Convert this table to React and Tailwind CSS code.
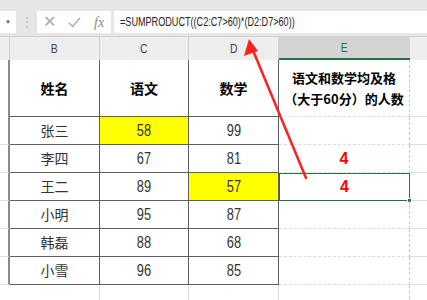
import React from 'react';

const cjk = { fontFamily: '"Noto Sans CJK SC", "Liberation Sans", sans-serif' };
const num = { fontFamily: '"Liberation Sans", sans-serif' };

const rows = [
  { name: '张三', chinese: 58, math: 99, yc: true },
  { name: '李四', chinese: 67, math: 81, result: '4' },
  { name: '王二', chinese: 89, math: 57, yd: true, result: '4', selected: true },
  { name: '小明', chinese: 95, math: 87 },
  { name: '韩磊', chinese: 88, math: 68 },
  { name: '小雪', chinese: 96, math: 85 },
];

const dark = 'border-[#5f5f5f]';

function FormulaBar() {
  return (
    <div className="h-[37px] bg-[#e6e6e6] flex items-start pt-[11px] border-b border-[#d0d0d0]">
      <div className="w-[16px] h-[22px] bg-white flex items-center justify-center text-[6px] text-[#555]">▼</div>
      <div className="w-[21px] h-[22px] flex items-center justify-center text-[12px] text-[#b5b5b5] leading-none">⋮</div>
      <div className="w-[74px] h-[22px] bg-white flex items-center text-[#a8a8a8]">
        <span className="ml-[6px] text-[16px] leading-none" style={{ fontFamily: '"Liberation Sans", sans-serif' }}>✕</span>
        <svg className="ml-[12px]" width="13" height="11" viewBox="0 0 13 11">
          <path d="M1 6 L4.5 9.5 L12 1" fill="none" stroke="#a8a8a8" strokeWidth="1.3" />
        </svg>
        <span className="ml-[13px] italic text-[14px] text-[#8a8a8a]" style={{ fontFamily: '"Liberation Serif", serif' }}>fx</span>
      </div>
      <div
        className="ml-[3px] flex-1 h-[22px] bg-white flex items-center pl-[6px] text-[13px] text-[#222] overflow-hidden"
        style={{ fontFamily: '"Liberation Sans", sans-serif' }}
      >
        <span className="inline-block whitespace-nowrap origin-left scale-x-[0.7]">=SUMPRODUCT((C2:C7&gt;60)*(D2:D7&gt;60))</span>
      </div>
    </div>
  );
}

function ColumnHeaders() {
  const base = 'h-[23px] flex items-center justify-center text-[13px] text-[#444] border-r border-[#cfcfcf]';
  return (
    <div className="flex bg-[#eeeeee]" style={{ fontFamily: '"Liberation Sans", sans-serif' }}>
      <div className={`${base} w-[10px]`}></div>
      <div className={`${base} w-[90px]`}><span className="inline-block scale-x-[0.8]">B</span></div>
      <div className={`${base} w-[89px]`}><span className="inline-block scale-x-[0.8]">C</span></div>
      <div className={`${base} w-[90px]`}><span className="inline-block scale-x-[0.8]">D</span></div>
      <div className="w-[131px] h-[23px] flex items-center justify-center text-[13px] text-[#217346] bg-[#d4d4d4] border-b-2 border-[#217346]"><span className="inline-block scale-x-[0.8]">E</span></div>
      <div className="flex-1 h-[23px]"></div>
    </div>
  );
}

export default function App() {
  return (
    <div className="relative w-[427px] h-[300px] bg-white overflow-hidden">
      <FormulaBar />
      <ColumnHeaders />

      {/* data header row */}
      <div className="flex h-[57px]">
        <div className="w-[10px] border-r-2 border-[#8a8a8a]"></div>
        <div className={`w-[90px] border-r ${dark} border-b flex items-center justify-center text-[14px] font-bold text-black`} style={cjk}>姓名</div>
        <div className={`w-[89px] border-r ${dark} border-b flex items-center justify-center text-[14px] font-bold text-black`} style={cjk}>语文</div>
        <div className={`w-[90px] border-r ${dark} border-b flex items-center justify-center text-[14px] font-bold text-black`} style={cjk}>数学</div>
        <div className="w-[131px] border-b border-[#dcdcdc] border-r border-r-[#c8c8c8] border-dashed flex flex-col items-center justify-center text-[13px] font-bold text-black leading-[21px]" style={cjk}>
          <span>语文和数学均及格</span>
          <span>（大于60分）的人数</span>
        </div>
        <div className="flex-1 border-b border-[#dcdcdc]"></div>
      </div>

      {rows.map((r, i) => (
        <div key={i} className="flex h-[28px]">
          <div className="w-[10px] border-r-2 border-[#8a8a8a] border-b border-b-[#e0e0e0]"></div>
          <div className={`w-[90px] border-r border-b ${dark} flex items-center justify-center text-[14px] text-[#333]`} style={cjk}>{r.name}</div>
          <div className={`w-[89px] border-r border-b ${dark} flex items-center justify-center text-[16px] text-[#333] ${r.yc ? 'bg-[#ffff00]' : ''}`} style={num}>
            <span className="inline-block scale-x-[0.8]">{r.chinese}</span>
          </div>
          <div className={`w-[90px] border-r border-b ${dark} flex items-center justify-center text-[16px] text-[#333] ${r.yd ? 'bg-[#ffff00]' : ''}`} style={num}>
            <span className="inline-block scale-x-[0.8]">{r.math}</span>
          </div>
          <div className={`relative w-[131px] flex items-center justify-center text-[16px] font-bold text-[#ff0000] ${r.selected ? 'border border-[#217346]' : 'border-b border-[#dcdcdc] border-r border-r-[#c8c8c8] border-dashed'}`} style={num}>
            {r.result}
            {r.selected && <div className="absolute right-[-3px] bottom-[-3px] w-[5px] h-[5px] bg-[#217346] border border-white"></div>}
          </div>
          <div className="flex-1 border-b border-[#dcdcdc]"></div>
        </div>
      ))}

      <div className="flex h-[20px]">
        <div className="w-[10px] border-b border-[#e0e0e0]"></div>
        <div className="w-[90px] border-r border-[#dcdcdc]"></div>
        <div className="w-[89px] border-r border-[#dcdcdc]"></div>
        <div className="w-[90px] border-r border-[#dcdcdc]"></div>
        <div className="w-[131px] border-r border-dashed border-[#c8c8c8]"></div>
        <div className="flex-1"></div>
      </div>

      {/* red arrow pointing to formula */}
      <svg className="absolute left-0 top-0 pointer-events-none" width="427" height="300">
        <line x1="306" y1="178" x2="252" y2="48" stroke="#ff2020" strokeWidth="2.5" strokeLinecap="round" />
        <polygon points="249,39 244,56 258,51" fill="#ff2020" />
      </svg>
    </div>
  );
}
